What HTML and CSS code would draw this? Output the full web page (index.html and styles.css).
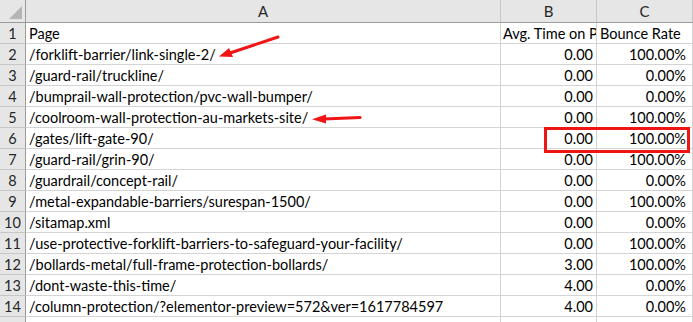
FILE: index.html
```html
<!DOCTYPE html>
<html lang="en">
<head>
<meta charset="utf-8">
<title>Pages report</title>
<link rel="stylesheet" href="styles.css">
</head>
<body>
<div class="sheet">
  <div class="grid">
    <div class="corner"><span class="corner-tri"></span></div>
    <div class="colhead">A</div>
    <div class="colhead">B</div>
    <div class="colhead">C</div>

    <div class="rowhead">1</div><div class="cell">Page</div><div class="cell clip">Avg. Time on P</div><div class="cell">Bounce Rate</div>
    <div class="rowhead">2</div><div class="cell">/forklift-barrier/link-single-2/</div><div class="cell num">0.00</div><div class="cell pct">100.00%</div>
    <div class="rowhead">3</div><div class="cell">/guard-rail/truckline/</div><div class="cell num">0.00</div><div class="cell pct">0.00%</div>
    <div class="rowhead">4</div><div class="cell">/bumprail-wall-protection/pvc-wall-bumper/</div><div class="cell num">0.00</div><div class="cell pct">0.00%</div>
    <div class="rowhead">5</div><div class="cell">/coolroom-wall-protection-au-markets-site/</div><div class="cell num">0.00</div><div class="cell pct">100.00%</div>
    <div class="rowhead">6</div><div class="cell">/gates/lift-gate-90/</div><div class="cell num">0.00</div><div class="cell pct">100.00%</div>
    <div class="rowhead">7</div><div class="cell">/guard-rail/grin-90/</div><div class="cell num">0.00</div><div class="cell pct">100.00%</div>
    <div class="rowhead">8</div><div class="cell">/guardrail/concept-rail/</div><div class="cell num">0.00</div><div class="cell pct">0.00%</div>
    <div class="rowhead">9</div><div class="cell">/metal-expandable-barriers/surespan-1500/</div><div class="cell num">0.00</div><div class="cell pct">100.00%</div>
    <div class="rowhead">10</div><div class="cell">/sitamap.xml</div><div class="cell num">0.00</div><div class="cell pct">0.00%</div>
    <div class="rowhead">11</div><div class="cell">/use-protective-forklift-barriers-to-safeguard-your-facility/</div><div class="cell num">0.00</div><div class="cell pct">100.00%</div>
    <div class="rowhead">12</div><div class="cell">/bollards-metal/full-frame-protection-bollards/</div><div class="cell num">3.00</div><div class="cell pct">100.00%</div>
    <div class="rowhead">13</div><div class="cell">/dont-waste-this-time/</div><div class="cell num">4.00</div><div class="cell pct">0.00%</div>
    <div class="rowhead">14</div><div class="cell">/column-protection/?elementor-preview=572&amp;ver=1617784597</div><div class="cell num">4.00</div><div class="cell pct">0.00%</div>
    <div class="rowhead"></div><div class="cell"></div><div class="cell"></div><div class="cell"></div>
  </div>

  <!-- red annotation marks drawn over the sheet -->
  <svg class="marks" width="693" height="322" viewBox="0 0 693 322">
    <g stroke="#f01414" stroke-width="3" fill="none" stroke-linecap="round">
      <line x1="278" y1="37" x2="230" y2="53"/>
      <line x1="360" y1="117.5" x2="324" y2="119"/>
    </g>
    <g fill="#f01414">
      <polygon points="219,56.5 229,48 233,57"/>
      <polygon points="312,119.3 326,114.5 326,123.5"/>
    </g>
    <rect x="545.5" y="128.5" width="143" height="23" fill="none" stroke="#f01414" stroke-width="3"/>
  </svg>
</div>
</body>
</html>
```

FILE: styles.css
```css
html, body {
  margin: 0;
  padding: 0;
  background: #ffffff;
}

.sheet {
  position: relative;
  width: 693px;
  height: 322px;
  overflow: hidden;
  font-family: Lato, "Liberation Sans", sans-serif;
  font-size: 14.5px;
  color: #000;
}

.grid {
  display: grid;
  grid-template-columns: 26px 475px 96px 96px;
  grid-template-rows: 23px repeat(15, 21px);
}

.grid > div {
  box-sizing: border-box;
  white-space: nowrap;
  overflow: visible;
}

.corner {
  position: relative;
  background: #e6e6e6;
  border-right: 1px solid #9b9b9b;
  border-bottom: 1px solid #9b9b9b;
}

.corner-tri {
  position: absolute;
  right: 3px;
  bottom: 3px;
  width: 0;
  height: 0;
  border-left: 13px solid transparent;
  border-bottom: 13px solid #b5b5b5;
}

.colhead {
  background: #e6e6e6;
  border-right: 1px solid #c6c6c6;
  border-bottom: 1px solid #9b9b9b;
  text-align: center;
  line-height: 22px;
  color: #262626;
  font-size: 15px;
}

.rowhead {
  background: #e6e6e6;
  border-right: 1px solid #9b9b9b;
  border-bottom: 1px solid #c6c6c6;
  text-align: center;
  line-height: 21px;
  color: #262626;
}

.cell {
  background: #fff;
  border-right: 1px solid #d4d4d4;
  border-bottom: 1px solid #d4d4d4;
  padding: 0 3px;
  line-height: 22px;
  position: relative;
  z-index: 0;
}

/* header text that runs into the next column is cut at the cell edge */
.clip {
  overflow: hidden !important;
  padding-left: 2px;
}

.num {
  text-align: right;
}

.pct {
  text-align: right;
  padding-right: 6px;
}

.marks {
  position: absolute;
  left: 0;
  top: 0;
  pointer-events: none;
}
```
